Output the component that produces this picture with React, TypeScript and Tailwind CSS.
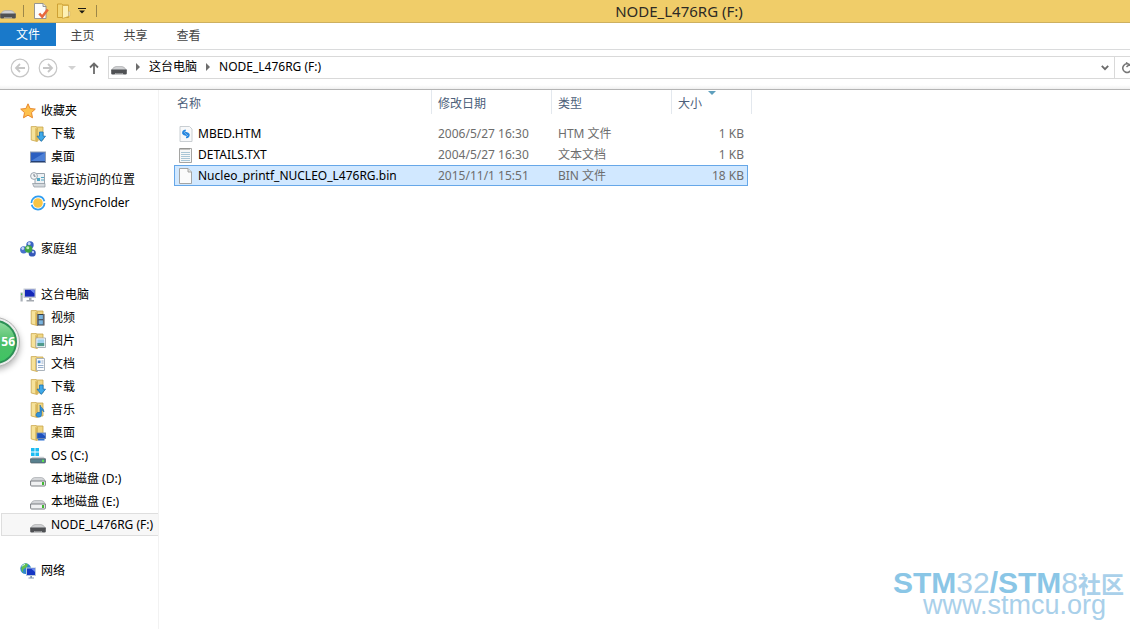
import { ReactNode, useState } from 'react';
import clsx from 'clsx';

type IconName =
  | 'star' | 'downloads' | 'desktop' | 'recent' | 'sync' | 'homegroup' | 'computer'
  | 'videos' | 'pictures' | 'documents' | 'music' | 'desktopFolder' | 'osDrive'
  | 'drive' | 'usb' | 'network' | 'htm' | 'txt' | 'file' | 'folder' | 'properties';

// Half open yellow folder shared by all library icons
const Folder = () => (
  <>
    <path d="M5 1h8v13H5z" fill="#efd684" stroke="#c9a548" strokeWidth=".8" />
    <path d="M1.200.6H6l1.300 1.200v13.700L1.200 14z" fill="#f6e29a" stroke="#c9a64c" strokeWidth=".8" />
    <path d="M5.300 2 7.300 2.800v12.600l-2-.5z" fill="#d9b658" />
  </>
);

const icons: Record<IconName, ReactNode> = {
  star: (
    <path
      d="m8 .8 2.100 4.700 5.200.6-3.800 3.500 1 5.200L8 12.200l-4.500 2.600 1-5.200L.7 6.100l5.200-.6z"
      fill="#fdc14d" stroke="#e8872c" strokeWidth="1" strokeLinejoin="round"
    />
  ),
  downloads: (
    <>
      <Folder />
      <path d="M9.500 6h3.600v4.200h2.400L11.300 15.400 7 10.200h2.500z" fill="#3fa9e8" stroke="#1b6fb0" strokeWidth=".8" />
    </>
  ),
  desktop: (
    <>
      <path d="M0 2.500h16v11.500H0z" fill="#8e9bb0" />
      <path d="M1 3.500h14v8.500H1z" fill="#2c5fc0" />
      <path d="M1 12 15 3.500V12z" fill="#4d80d6" />
      <path d="M1 12h14v1H1z" fill="#243f74" />
    </>
  ),
  recent: (
    <>
      <path d="M5 1.500h9.500v10.500H5z" fill="#eef1f4" stroke="#9aa4ad" />
      <path d="M7 6h3v3H7zM11 5h3v1h-3zM11 7.500h3v1h-3z" fill="#4fa7c4" />
      <path d="M2.500 11.500H15v3.500H4z" fill="#d4d9dd" stroke="#8d979f" strokeWidth=".7" />
      <circle cx="4" cy="4" r="3.400" fill="#f4f6f7" stroke="#9aa4ad" />
      <path d="M4 2v2.200h1.600" fill="none" stroke="#66717b" strokeWidth=".9" />
    </>
  ),
  sync: (
    <>
      <circle cx="8" cy="8" r="4.800" fill="#f8c545" />
      <circle cx="8" cy="8" r="6.600" fill="none" stroke="#2f9df0" strokeWidth="1.700" strokeDasharray="18.700 2" />
    </>
  ),
  homegroup: (
    <>
      <circle cx="10" cy="4" r="3.700" fill="#3b63c4" />
      <circle cx="3.700" cy="8.800" r="3.600" fill="#4771cc" />
      <circle cx="12.200" cy="12" r="3.600" fill="#3457b8" />
      <circle cx="8.600" cy="8" r="3.800" fill="#3fa545" />
      <circle cx="9.200" cy="2.600" r="1.500" fill="#c3d5f8" />
      <circle cx="2.800" cy="7.500" r="1.400" fill="#c3d5f8" />
      <circle cx="7.800" cy="6.700" r="1.500" fill="#c4edb6" />
      <circle cx="13" cy="11" r="1.200" fill="#b5caf2" />
    </>
  ),
  computer: (
    <>
      <path d="M3.500 1.500H16V11H3.500z" fill="#c5cad2" />
      <path d="M5 2.800h9.600v6.800H5z" fill="#1428b8" />
      <path d="M10 2.800h4.600v4z" fill="#6c86ee" />
      <path d="M9 11h2.500v2H14v1.500H6.500V13H9z" fill="#a4a9b0" />
      <path d="M.5 5.500h2.200v9H.5z" fill="#aab0b8" />
      <path d="M1 6.500h1.200v1.500H1z" fill="#4fbf4a" />
    </>
  ),
  videos: (
    <>
      <Folder />
      <path d="M7 4h7.500v11.500H7z" fill="#383c44" />
      <path d="M8.600 5h4.300v4.300H8.600zM8.600 10.300h4.300v4.300H8.600z" fill="#79b4df" />
      <path d="M7.700 4.500v10.500M13.800 4.500v10.500" stroke="#d6dbe0" strokeWidth=".8" strokeDasharray="1 1" />
    </>
  ),
  pictures: (
    <>
      <Folder />
      <path d="M6 5h9.500v9.500H6z" fill="#fff" stroke="#9fa9b2" strokeWidth=".9" />
      <path d="M7.300 6.300h7V10h-7z" fill="#9fd0ee" />
      <path d="M7.300 10h7v3.200h-7z" fill="#4f9a8c" />
    </>
  ),
  documents: (
    <>
      <Folder />
      <path d="M6.500 2.500h8v12h-8z" fill="#fbfcfd" stroke="#a3adb7" strokeWidth=".9" />
      <path d="M7.800 4.500h2.700v2.700H7.800z" fill="#4d8fd6" />
      <path d="M11.500 5h2M11.500 7h2M8 9.500h5.500M8 11.500h5.500" stroke="#8aa6c6" strokeWidth=".9" />
    </>
  ),
  music: (
    <>
      <Folder />
      <path d="M10 3c.5 2.600 4.200 3.500 3.900 7-.6-1.400-1.500-2-2.400-2.200v4.900a2.700 2.400 0 1 1-1.500-2.100z" fill="#2f93dc" stroke="#1a67ab" strokeWidth=".6" />
    </>
  ),
  desktopFolder: (
    <>
      <Folder />
      <path d="M6.500 7.500H16v6.500H6.500z" fill="#7e92ad" />
      <path d="M7.300 8.300h8v4.900h-8z" fill="#1e51bd" />
      <path d="M11.500 8.300h3.800v3z" fill="#6d97e8" />
      <path d="M8 14h6.500v1.500H8z" fill="#2d6fd0" />
    </>
  ),
  osDrive: (
    <>
      <path d="M1 0h3.600v3.600H1zM5.400 0H9v3.600H5.400zM1 4.400h3.600V8H1zM5.400 4.400H9V8H5.400z" fill="#1cbcf2" />
      <path d="M2.500 8.800.5 11h15l-2-2.200z" fill="#c9ced3" />
      <path d="M.5 10.800h15V14q0 1-1 1h-13q-1 0-1-1z" fill="#58808e" stroke="#4f5d66" strokeWidth=".7" />
      <path d="M12 11.800h2V14h-2z" fill="#5ee052" />
    </>
  ),
  drive: (
    <>
      <path d="M.6 10.500Q2 6.500 4.500 6.500h7q2.500 0 3.900 4z" fill="#d3d5d8" stroke="#a9acb0" strokeWidth=".7" />
      <path d="M.6 10h14.800v4q0 1-1 1H1.600q-1 0-1-1z" fill="#f0f1f2" stroke="#7b7e83" strokeWidth="1" />
      <path d="M12 11h2v3h-2z" fill="#42b832" />
    </>
  ),
  usb: (
    <>
      <path d="M.4 11.500Q2.500 7.500 5 7.500h6q2.500 0 4.600 4z" fill="#cfd0d2" stroke="#a4a6a8" strokeWidth=".6" />
      <path d="M.2 10.600h15.600v4q0 1-1.200 1h-2.200L11.400 14H4.600l-1 1.600H1.400q-1.200 0-1.200-1z" fill="#4f5154" />
      <path d="M4.600 14h6.800l1 1.600H3.600z" fill="#8e9092" />
    </>
  ),
  network: (
    <>
      <circle cx="5.700" cy="5.700" r="5.400" fill="#2e86cf" />
      <path d="M3 1.300q4-2 5 .4Q7 5 4.500 5.500T3.500 10Q-.5 7 3 1.300z" fill="#62c04b" />
      <path d="M2 3.500q1-2 3-2" stroke="#d8f3ff" fill="none" />
      <path d="M6 4.500h10v8.500H6z" fill="#b9c8da" />
      <path d="M7 5.500h8V12H7z" fill="#1536c4" />
      <path d="M11 5.500h4v3.500z" fill="#6d8cf0" />
      <path d="M10.300 13h1.700v1.500h2v1H8.500v-1h1.800z" fill="#7f95b2" />
    </>
  ),
  htm: (
    <>
      <path d="M2 .5h9.500L14 3v12.500H2z" fill="#f8f9fa" stroke="#c3c8cd" strokeWidth=".9" />
      <path d="M7.800 4.300Q4.600 4.800 5 7.500q.5 1.200 2.600 1.500L5.800 7M8 11.500q3.200-.5 2.800-3.200Q10.300 7.100 8.200 6.800L10 8.800" fill="none" stroke="#2687e0" strokeWidth="1.700" />
    </>
  ),
  txt: (
    <>
      <path d="M1.500 1.500h12v14h-12z" fill="#f7f8f8" stroke="#9b9b99" strokeWidth=".9" />
      <path d="M3 5.500h9M3 7.500h9M3 9.500h9M3 11.500h9M3 13.500h9" stroke="#a9c6d6" />
      <path d="M3 1v2M5 1v2M7 1v2M9 1v2M11 1v2" stroke="#85857f" strokeWidth=".9" />
    </>
  ),
  file: (
    <>
      <path d="M1.500.5H10L13.500 4v11.500h-12z" fill="#fbfbfb" stroke="#9c9c9a" strokeWidth=".9" />
      <path d="M10 .5V4h3.500" fill="#e4e4e2" stroke="#9c9c9a" strokeWidth=".9" />
    </>
  ),
  folder: (
    <>
      <path d="M1.500 1h4l1.500 1h5.500v12.500h-11z" fill="#f3d673" stroke="#c99b2e" strokeWidth=".9" />
      <path d="M6.500 2.500h6v11l-6 2z" fill="#fdf0b4" stroke="#d0a63d" strokeWidth=".8" />
      <path d="M12.500 8.500h1.300v4.500h-1.300z" fill="#e9f0f4" stroke="#c2a96a" strokeWidth=".5" />
    </>
  ),
  properties: (
    <>
      <path d="M.5.5H9L12 3.500v12H.5z" fill="#fdfdfd" stroke="#8c8c8c" strokeWidth=".9" />
      <path d="M9 .5v3h3" fill="#e6e6e6" stroke="#8c8c8c" strokeWidth=".9" />
      <path d="m5.300 10.500 2.900 3.300L13.800 6.500" fill="none" stroke="#e8683a" strokeWidth="2.600" />
    </>
  ),
};

const Icon = ({ name }: { name: IconName }) => (
  <svg viewBox="0 0 16 16" className="w-4 h-4 shrink-0" aria-hidden="true">{icons[name]}</svg>
);

interface NavItem {
  label: string;
  icon: IconName;
}

interface NavGroup extends NavItem {
  items: NavItem[];
}

const navGroups: NavGroup[] = [
  {
    label: '收藏夹',
    icon: 'star',
    items: [
      { label: '下载', icon: 'downloads' },
      { label: '桌面', icon: 'desktop' },
      { label: '最近访问的位置', icon: 'recent' },
      { label: 'MySyncFolder', icon: 'sync' },
    ],
  },
  { label: '家庭组', icon: 'homegroup', items: [] },
  {
    label: '这台电脑',
    icon: 'computer',
    items: [
      { label: '视频', icon: 'videos' },
      { label: '图片', icon: 'pictures' },
      { label: '文档', icon: 'documents' },
      { label: '下载', icon: 'downloads' },
      { label: '音乐', icon: 'music' },
      { label: '桌面', icon: 'desktopFolder' },
      { label: 'OS (C:)', icon: 'osDrive' },
      { label: '本地磁盘 (D:)', icon: 'drive' },
      { label: '本地磁盘 (E:)', icon: 'drive' },
      { label: 'NODE_L476RG (F:)', icon: 'usb' },
    ],
  },
  { label: '网络', icon: 'network', items: [] },
];

const files: { name: string; date: string; type: string; size: string; icon: IconName }[] = [
  { name: 'MBED.HTM', date: '2006/5/27 16:30', type: 'HTM 文件', size: '1 KB', icon: 'htm' },
  { name: 'DETAILS.TXT', date: '2004/5/27 16:30', type: '文本文档', size: '1 KB', icon: 'txt' },
  { name: 'Nucleo_printf_NUCLEO_L476RG.bin', date: '2015/11/1 15:51', type: 'BIN 文件', size: '18 KB', icon: 'file' },
];

const tabs = ['主页', '共享', '查看'];

const Chevron = () => (
  <svg viewBox="0 0 4 8" className="w-1 h-2 shrink-0" aria-hidden="true">
    <path d="M0 0l4 4-4 4z" fill="#6d6d6d" />
  </svg>
);

const thClass = 'relative h-6 p-0 pt-1 text-left font-normal border-r border-[#e3e8ee]';

export default function App() {
  const [current, setCurrent] = useState('NODE_L476RG (F:)');
  const [selected, setSelected] = useState(2);

  return (
    <div className="relative min-h-screen flex flex-col overflow-hidden bg-white text-black text-[12px] leading-4 font-['Noto_Sans','Noto_Sans_CJK_SC',sans-serif]">
      {/* Title bar */}
      <header className="flex items-center h-[23px] bg-[#f0cd69] border-b border-[#cdb060]">
        <div className="flex items-center w-[228px] shrink-0">
          <Icon name="usb" />
          <span className="w-px h-3 ml-[7px] mr-2.5 bg-[#9d8748]" />
          <button aria-label="属性"><Icon name="properties" /></button>
          <button aria-label="新建文件夹" className="ml-1.5"><Icon name="folder" /></button>
          <button aria-label="自定义快速访问工具栏" className="ml-1.5">
            <svg viewBox="0 0 8 6" className="w-2 h-1.5"><path d="M0 0h8v1H0zM1 2.500h6L4 5.500z" fill="#1c1a14" /></svg>
          </button>
          <span className="w-px h-3 ml-2.5 bg-[#9d8748]" />
        </div>
        <h1 className="flex-1 text-center text-[15px] text-[#2c2a24]">NODE_L476RG (F:)</h1>
      </header>

      {/* Ribbon tabs */}
      <nav className="flex h-[27px] border-b border-[#dadbdc] text-[#444]">
        <button className="w-14 h-[23px] bg-[#1979ca] text-white">文件</button>
        {tabs.map((tab) => (
          <button key={tab} className="w-[53px]">{tab}</button>
        ))}
      </nav>

      {/* Address bar */}
      <div className="flex items-center h-10 pb-1 border-b border-[#b4b4b4] bg-linear-to-b from-white from-90% to-[#f0f0f0]">
        <button aria-label="后退" className="ml-2.5">
          <svg viewBox="0 0 20 20" className="w-5 h-5" fill="none" stroke="#c6c6c6">
            <circle cx="10" cy="10" r="8.800" strokeWidth="1.200" />
            <path d="M15 10H6m4-4-4 4 4 4" strokeWidth="1.800" />
          </svg>
        </button>
        <button aria-label="前进" className="ml-2">
          <svg viewBox="0 0 20 20" className="w-5 h-5" fill="none" stroke="#c6c6c6">
            <circle cx="10" cy="10" r="8.800" strokeWidth="1.200" />
            <path d="M5 10h9m-4-4 4 4-4 4" strokeWidth="1.800" />
          </svg>
        </button>
        <button aria-label="最近浏览的位置" className="ml-2.5">
          <svg viewBox="0 0 8 4" className="w-2 h-1"><path d="M0 0h8L4 4z" fill="#d2d2d2" /></svg>
        </button>
        <button aria-label="上移" className="ml-3">
          <svg viewBox="0 0 12 14" className="w-3 h-3.5" fill="none" stroke="#6b6b6b" strokeWidth="1.800">
            <path d="M6 13V2M2 6.500l4-4 4 4" />
          </svg>
        </button>
        <div className="flex flex-1 items-center h-[23px] ml-2 border border-r-0 border-[#d9d9d9] bg-white">
          <div className="flex flex-1 items-center gap-[9px] pb-px pl-0.5">
            <Icon name="usb" />
            <Chevron />
            <button>这台电脑</button>
            <Chevron />
            <button>{current}</button>
          </div>
          <button aria-label="上一个位置" className="px-[5px]">
            <svg viewBox="0 0 8 6" className="w-2 h-1.5" fill="none" stroke="#6b6b6b" strokeWidth="1.800">
              <path d="m.8.8 3.200 3.400L7.200.8" />
            </svg>
          </button>
          <button aria-label="刷新" className="w-4 h-full pl-1.5 overflow-hidden border-l border-[#d9d9d9]">
            <svg viewBox="0 0 12 12" className="w-3 h-3" fill="none" stroke="#777" strokeWidth="1.600">
              <path d="M9.500 3.500A4.300 4.300 0 1 0 10.300 7M5 .5l3 2.300L5.500 5" />
            </svg>
          </button>
        </div>
      </div>

      <div className="flex flex-1">
        {/* Navigation pane */}
        <aside className="w-[159px] shrink-0 pt-[9px] pl-px border-r border-[#f2f2f2]">
          {navGroups.map((group) => (
            <section key={group.label} className="mb-[23px]">
              <button className="flex items-center gap-[5px] w-full h-[23px] pl-[19px]">
                <Icon name={group.icon} />
                {group.label}
              </button>
              {group.items.map((item) => (
                <button
                  key={item.label}
                  onClick={() => setCurrent(item.label)}
                  className={clsx(
                    'flex items-center gap-[5px] w-full h-[23px] border border-r-0 pl-7 whitespace-nowrap',
                    item.label === current ? 'bg-[#f7f7f7] border-[#dedede]' : 'border-transparent',
                  )}
                >
                  <Icon name={item.icon} />
                  {item.label}
                </button>
              ))}
            </section>
          ))}
        </aside>

        {/* File list */}
        <main className="flex-1 pl-[15px]">
          <table className="table-fixed w-[578px] border-separate border-spacing-0">
            <thead className="text-[#4c607a]">
              <tr>
                <th className={clsx(thClass, 'w-[258px] pl-[3px]')}>名称</th>
                <th className={clsx(thClass, 'w-[120px] pl-1.5')}>修改日期</th>
                <th className={clsx(thClass, 'w-[120px] pl-1.5')}>类型</th>
                <th className="relative h-6 w-[76px] p-0 pt-1 pl-1.5 text-left font-normal">
                  大小
                  <svg viewBox="0 0 8 4" className="absolute top-px left-9 w-2 h-1"><path d="M0 0h8L4 4z" fill="#5f9fbd" /></svg>
                </th>
                <th className="w-1 p-0 border-r border-[#e3e8ee]" />
              </tr>
              <tr><td className="h-[9px] p-0" /></tr>
            </thead>
            <tbody className="text-[#6d6d6d]">
              {files.map((file, idx) => {
                const cell = clsx('h-[21px] p-0 border-y', idx === selected ? 'bg-[#d1e8ff] border-[#66a7e8]' : 'border-transparent');
                return (
                  <tr key={file.name} onClick={() => setSelected(idx)}>
                    <td className={clsx(cell, 'border-l pl-[3px] text-black')}>
                      <span className="flex items-center gap-1 whitespace-nowrap">
                        <Icon name={file.icon} />
                        {file.name}
                      </span>
                    </td>
                    <td className={clsx(cell, 'pl-1.5')}>{file.date}</td>
                    <td className={clsx(cell, 'pl-1.5')}>{file.type}</td>
                    <td className={clsx(cell, 'border-r pr-[3px] text-right')}>{file.size}</td>
                  </tr>
                );
              })}
            </tbody>
          </table>
        </main>
      </div>

      {/* Floating percentage ball docked to the left edge */}
      <div className="absolute top-[317px] -left-[30px] flex items-center justify-end w-[50px] h-[50px] pr-1 rounded-full border border-[#b4b4b4] bg-[#ececec] shadow-[0_3px_6px_rgba(0,0,0,0.3)]">
        <div className="absolute inset-[2px] rounded-full border-2 border-[#2c8f55] bg-linear-to-b from-[#8fdb9f] via-[#4cbf68] to-[#3fc463]" />
        <span className="relative text-[12px] font-bold text-white">56</span>
      </div>

      {/* Forum watermark */}
      <div className="absolute right-1.5 bottom-3.5 text-[#a9d0ea] font-['Liberation_Sans','Noto_Sans_CJK_SC',sans-serif]">
        <p className="text-[30px] leading-5 whitespace-nowrap">
          <b className="text-[#8ac6e6]">STM</b>32<b className="text-[#8ac6e6]">/STM</b>8<b className="text-[23px]">社区</b>
        </p>
        <p className="pr-[18px] text-right text-[27px] leading-5">www.stmcu.org</p>
      </div>
    </div>
  );
}
